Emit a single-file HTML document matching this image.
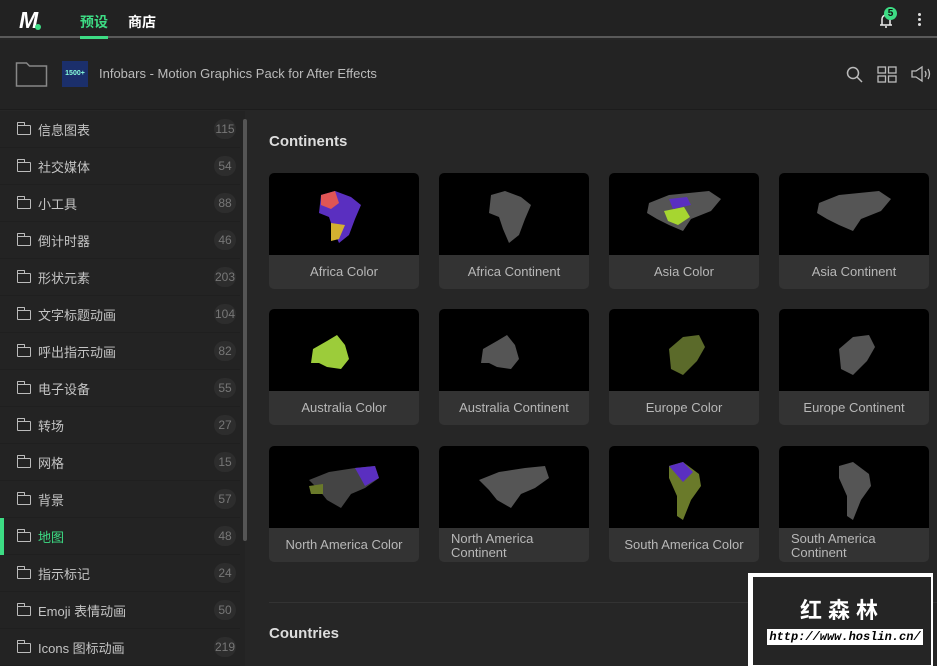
<!DOCTYPE html>
<html><head><meta charset="utf-8"><style>
*{margin:0;padding:0;box-sizing:border-box}
body{width:937px;height:666px;overflow:hidden;background:#262626;font-family:"Liberation Sans","Noto Sans CJK SC",sans-serif;color:#ccc;position:relative}
.top{position:absolute;left:0;top:0;width:937px;height:38px;background:#222;border-bottom:2px solid #5a5a5a}
.tab{position:absolute;top:12px;font-size:14px;font-weight:bold}
.hdr{position:absolute;left:0;top:40px;width:937px;height:70px;background:#232323;border-bottom:1px solid #1c1c1c}
.side{position:absolute;left:0;top:111px;width:245px;height:555px;background:#232323}
.row{position:absolute;left:0;width:240px;height:37px;border-bottom:1px solid #1f1f1f;font-size:13px;color:#c4c4c4}
.row .t{position:absolute;left:38px;top:9px}
.row .f{position:absolute;left:17px;top:14px;width:14px;height:10px;border:1.3px solid #bbb;border-radius:1px}
.row .f:before{content:"";position:absolute;left:-1.3px;top:-4px;width:6px;height:3px;border:1.3px solid #bbb;border-bottom:none;border-radius:1px 1px 0 0}
.row .n{position:absolute;right:4px;top:8px;width:22px;height:20px;border-radius:10px;background:#2d2d2d;color:#777;font-size:12px;text-align:center;line-height:20px}
.card{position:absolute;width:150px;height:116px;border-radius:5px;overflow:hidden;background:#333}
.card .img{height:82px;background:#000;position:relative}
.card .l{font-size:13px;color:#b8b8b8;text-align:center;line-height:34px}
.card .l2{font-size:13px;color:#b8b8b8;line-height:14px;padding:4px 12px}
h2{position:absolute;left:269px;font-size:15px;color:#ddd;font-weight:bold}
</style></head><body>
<div class="top">
 <div style="position:absolute;left:19px;top:7px;font-size:23px;font-weight:900;color:#fff;font-style:italic;letter-spacing:-1px">M</div>
 <div style="position:absolute;left:35px;top:24px;width:6px;height:6px;border-radius:3px;background:#3ddc84"></div>
 <div class="tab" style="left:80px;color:#3ddc84">预设</div>
 <div style="position:absolute;left:80px;top:36px;width:28px;height:3px;background:#3ddc84"></div>
 <div class="tab" style="left:128px;color:#fff">商店</div>
 <svg style="position:absolute;left:876px;top:10px" width="20" height="20"><path d="M4 15h12M6 15V9a4 4 0 0 1 8 0v6M9 17h2" stroke="#eee" stroke-width="1.5" fill="none"/></svg>
 <div style="position:absolute;left:884px;top:7px;width:13px;height:13px;border-radius:7px;background:#3ddc84;color:#111;font-size:10px;font-weight:bold;text-align:center;line-height:13px">5</div>
 <div style="position:absolute;left:918px;top:13px;width:3px;height:3px;background:#ddd;box-shadow:0 5px #ddd,0 10px #ddd;border-radius:2px"></div>
</div>
<div class="hdr">
 <svg style="position:absolute;left:15px;top:20px" width="34" height="28"><path d="M1.5 3h10l3 3h17v20h-30z" fill="none" stroke="#888" stroke-width="1.5"/></svg>
 <div style="position:absolute;left:62px;top:21px;width:26px;height:26px;background:#1b2f6b;color:#8fd;font-size:7px;font-weight:bold;text-align:center;line-height:26px">1500+</div>
 <div style="position:absolute;left:99px;top:26px;font-size:13px;color:#bbb">Infobars - Motion Graphics Pack for After Effects</div>
 <svg style="position:absolute;left:845px;top:25px" width="92" height="20"><circle cx="8" cy="8" r="5.5" stroke="#bbb" stroke-width="1.5" fill="none"/><path d="M12 12l5 5" stroke="#bbb" stroke-width="1.5"/><g fill="none" stroke="#bbb" stroke-width="1.3"><rect x="33" y="2" width="7.5" height="6"/><rect x="43.5" y="2" width="7.5" height="6"/><rect x="33" y="11" width="7.5" height="6"/><rect x="43.5" y="11" width="7.5" height="6"/><path d="M67 6h4l6-4v14l-6-4h-4zM80 6q2 3 0 6M83 4q3 5 0 10"/></g></svg>
</div>
<div class="side">
 <div class="row" style="top:0"><div class="f"></div><div class="t">信息图表</div><div class="n">115</div></div>
 <div class="row" style="top:37px"><div class="f"></div><div class="t">社交媒体</div><div class="n">54</div></div>
 <div class="row" style="top:74px"><div class="f"></div><div class="t">小工具</div><div class="n">88</div></div>
 <div class="row" style="top:111px"><div class="f"></div><div class="t">倒计时器</div><div class="n">46</div></div>
 <div class="row" style="top:148px"><div class="f"></div><div class="t">形状元素</div><div class="n">203</div></div>
 <div class="row" style="top:185px"><div class="f"></div><div class="t">文字标题动画</div><div class="n">104</div></div>
 <div class="row" style="top:222px"><div class="f"></div><div class="t">呼出指示动画</div><div class="n">82</div></div>
 <div class="row" style="top:259px"><div class="f"></div><div class="t">电子设备</div><div class="n">55</div></div>
 <div class="row" style="top:296px"><div class="f"></div><div class="t">转场</div><div class="n">27</div></div>
 <div class="row" style="top:333px"><div class="f"></div><div class="t">网格</div><div class="n">15</div></div>
 <div class="row" style="top:370px"><div class="f"></div><div class="t">背景</div><div class="n">57</div></div>
 <div class="row" style="top:407px"><div style="position:absolute;left:0;top:0;width:4px;height:37px;background:#3ddc84"></div><div class="f"></div><div class="t" style="color:#3ddc84">地图</div><div class="n">48</div></div>
 <div class="row" style="top:444px"><div class="f"></div><div class="t">指示标记</div><div class="n">24</div></div>
 <div class="row" style="top:481px"><div class="f"></div><div class="t">Emoji 表情动画</div><div class="n">50</div></div>
 <div class="row" style="top:518px"><div class="f"></div><div class="t">Icons 图标动画</div><div class="n">219</div></div>
 <div style="position:absolute;left:243px;top:8px;width:4px;height:422px;background:#555;border-radius:2px"></div>
</div>
<h2 style="top:133px">Continents</h2>
<div class="card" style="left:269px;top:173px"><div class="img"><svg width="150" height="82"><path d="M52 22l14-4 16 6 10 8-6 14-6 16-10 8-6-14-4-12-10-4z" fill="#5a2fc0"/><path d="M52 22l14-4 4 12-8 6-10-4z" fill="#e05555"/><path d="M62 50l14 2-6 14-8 2z" fill="#d4b030"/></svg></div><div class="l">Africa Color</div></div>
<div class="card" style="left:439px;top:173px"><div class="img"><svg width="150" height="82"><path d="M52 22l14-4 16 6 10 8-6 14-6 16-10 8-6-14-4-12-10-4z" fill="#555"/></svg></div><div class="l">Africa Continent</div></div>
<div class="card" style="left:609px;top:173px"><div class="img"><svg width="150" height="82"><path d="M40 30l20-8 40-4 12 8-10 12-20 8-8 12-14-6-12-6-10-6z" fill="#555"/><path d="M55 38l20-4 6 10-12 8-10-4z" fill="#a6d630"/><path d="M60 26l18-2 4 8-18 4z" fill="#5a2fc0"/></svg></div><div class="l">Asia Color</div></div>
<div class="card" style="left:779px;top:173px"><div class="img"><svg width="150" height="82"><path d="M40 30l20-8 40-4 12 8-10 12-20 8-8 12-14-6-12-6-10-6z" fill="#555"/></svg></div><div class="l">Asia Continent</div></div>
<div class="card" style="left:609px;top:309px"><div class="img"><svg width="150" height="82"><path d="M60 40l14-12 16-2 6 12-8 14-14 14-12-6z" fill="#5b6a2a"/></svg></div><div class="l">Europe Color</div></div>
<div class="card" style="left:269px;top:309px"><div class="img"><svg width="150" height="82"><path d="M44 40l14-8 10-6 8 10 4 14-8 10-14-2-8-4-8 0z" fill="#9ccc3a"/></svg></div><div class="l">Australia Color</div></div>
<div class="card" style="left:439px;top:309px"><div class="img"><svg width="150" height="82"><path d="M44 40l14-8 10-6 8 10 4 14-8 10-14-2-8-4-8 0z" fill="#555"/></svg></div><div class="l">Australia Continent</div></div>
<div class="card" style="left:779px;top:309px"><div class="img"><svg width="150" height="82"><path d="M60 40l14-12 16-2 6 12-8 14-14 14-12-6z" fill="#555"/></svg></div><div class="l">Europe Continent</div></div>
<div class="card" style="left:269px;top:446px"><div class="img"><svg width="150" height="82"><path d="M40 34l20-8 26-4 20-2 4 12-14 10-14 6-10 14-14-8-8-10z" fill="#444"/><path d="M86 22l20-2 4 12-14 8z" fill="#5a2fc0"/><path d="M40 40l14-2 0 10-12 0z" fill="#6a7a2a"/></svg></div><div class="l">North America Color</div></div>
<div class="card" style="left:439px;top:446px"><div class="img"><svg width="150" height="82"><path d="M40 34l20-8 26-4 20-2 4 12-14 10-14 6-10 14-14-8-8-10z" fill="#555"/></svg></div><div class="l2">North America<br>Continent</div></div>
<div class="card" style="left:609px;top:446px"><div class="img"><svg width="150" height="82"><path d="M60 20l14-4 16 12 2 12-10 14-8 20-6-4 0-20-8-18z" fill="#6a7a2a"/><path d="M60 20l14-4 10 10-10 10z" fill="#5a2fc0"/></svg></div><div class="l">South America Color</div></div>
<div class="card" style="left:779px;top:446px"><div class="img"><svg width="150" height="82"><path d="M60 20l14-4 16 12 2 12-10 14-8 20-6-4 0-20-8-18z" fill="#555"/></svg></div><div class="l2">South America<br>Continent</div></div>
<div style="position:absolute;left:269px;top:602px;width:668px;height:1px;background:#333"></div>
<h2 style="top:625px">Countries</h2>
<div style="position:absolute;left:748px;top:573px;width:185px;height:93px;background:#fff;padding:4px 0 0 5px">
 <div style="width:178px;height:88px;background:#252525;position:relative">
  <div style="position:absolute;left:0;width:178px;top:16px;text-align:center;font-size:22px;font-weight:bold;color:#fff;letter-spacing:6px">红森林</div>
  <div style="position:absolute;left:14px;top:52px;width:156px;height:16px;background:#fff;color:#000;font-family:'Liberation Mono',monospace;font-size:12px;font-weight:bold;font-style:italic;line-height:16px;text-align:center">http://www.hoslin.cn/</div>
 </div>
</div>
</body></html>
